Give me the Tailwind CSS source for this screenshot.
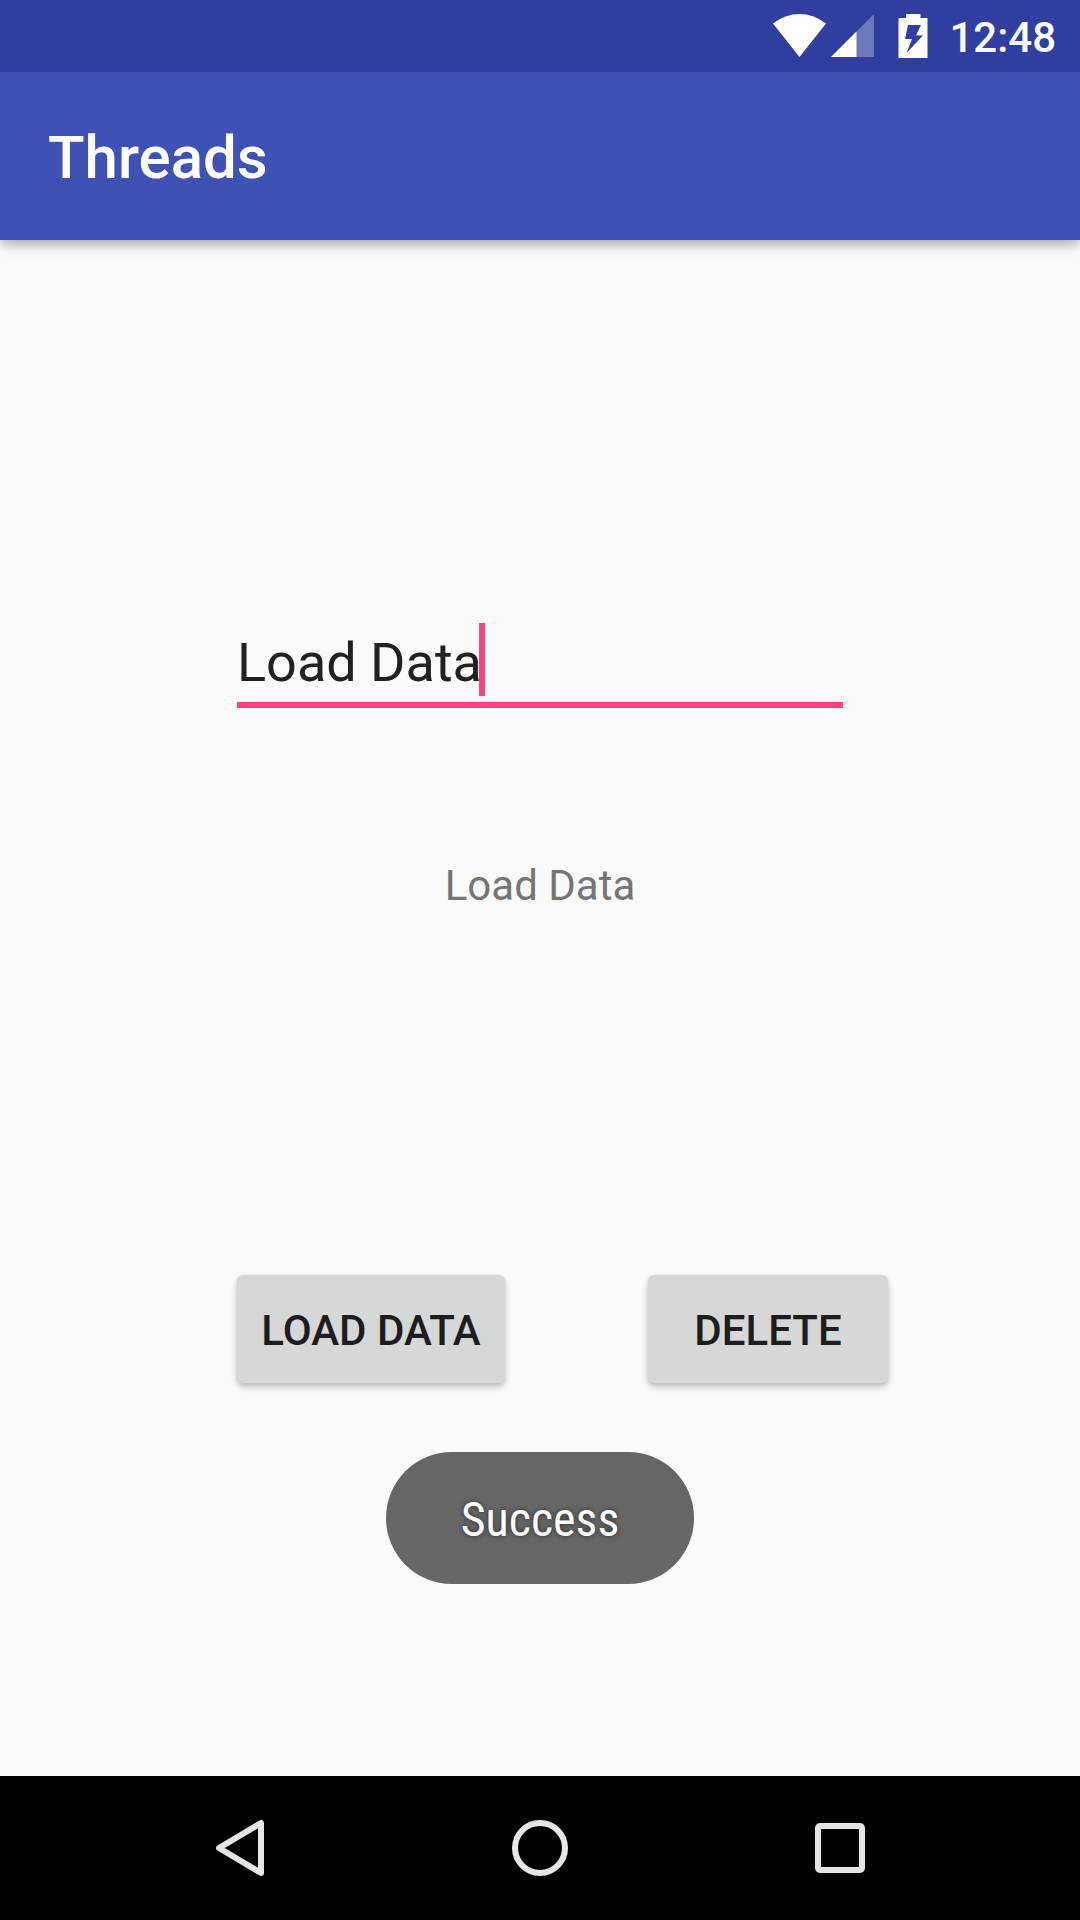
<!DOCTYPE html>
<html lang="en">
<head>
<meta charset="utf-8">
<meta name="viewport" content="width=device-width, initial-scale=1">
<title>Threads</title>
<script src="https://cdn.jsdelivr.net/npm/@tailwindcss/browser@4"></script>
</head>
<body class="flex min-h-screen flex-col bg-[#fafafa] font-['Roboto',sans-serif]">
  <!-- Status bar -->
  <div class="relative z-10 flex h-[72px] items-start justify-end bg-[#303f9f] pr-6 text-white">
    <svg class="mt-[14px] h-[44px] w-[54px]" viewBox="0 0 54 44" fill="currentColor" role="img" aria-label="Wi-Fi"><path d="M0 9.5Q12 0 26.500 0T53 9.500L26.500 43Z"/></svg>
    <svg class="mt-[14px] ml-1 h-[44px] w-[43px]" viewBox="0 0 43 44" fill="currentColor" role="img" aria-label="Signal"><path d="M43 0V43H0Z" opacity=".3"/><path d="M25.500 17.500V43H0Z"/></svg>
    <svg class="mt-[14px] ml-6 h-[44px] w-[30px]" viewBox="0 0 30 44" fill="currentColor" role="img" aria-label="Battery charging"><path fill-rule="evenodd" d="M8 0H22.500V4H29.500V44H.5V4H8ZM10 11L7 25H14L8.500 39L25 21.500H18L23 11Z"/></svg>
    <span class="ml-[21px] pt-1 text-[42px] leading-[68px] font-medium">12:48</span>
  </div>

  <!-- App bar -->
  <header class="relative flex h-[168px] items-center bg-[#3f51b5] px-12 pt-1 shadow-[0_4px_12px_rgba(0,0,0,0.34)]">
    <h1 class="text-[60px] leading-[72px] font-medium text-white">Threads</h1>
  </header>

  <main class="relative flex flex-1 flex-col items-center pt-[382px] pb-96">
    <div class="relative w-[606px]">
      <input type="text" value="Load Data" aria-label="Data" class="block h-[86px] w-full rounded-none border-b-6 border-[#ff4081] bg-transparent text-[54px] text-[#212121] caret-[#ff4081] outline-none">
      <span class="absolute top-px left-[242px] h-[73px] w-[6px] bg-[#ff4081]"></span>
    </div>
    <p class="mt-[150px] text-[42px] leading-[56px] text-[#757575]">Load Data</p>
    <div class="mt-[361px] flex w-[606px] gap-[143px]">
      <button type="button" class="h-[108px] w-[268px] shrink-0 rounded-md bg-[#d6d7d7] pt-0.5 text-[42px] font-medium whitespace-nowrap text-[#1d1d1d] shadow-[0_4px_6px_rgba(0,0,0,0.24),0_0_2px_rgba(0,0,0,0.08)]">LOAD DATA</button>
      <button type="button" class="h-[108px] w-[240px] shrink-0 rounded-md bg-[#d6d7d7] pt-0.5 text-[42px] font-medium whitespace-nowrap text-[#1d1d1d] shadow-[0_4px_6px_rgba(0,0,0,0.24),0_0_2px_rgba(0,0,0,0.08)]">DELETE</button>
    </div>

    <!-- Toast -->
    <div role="status" class="absolute bottom-48 left-1/2 flex h-[132px] w-[308px] -translate-x-1/2 items-center justify-center rounded-full bg-[#666666] pt-1 font-['Roboto_Condensed','Liberation_Sans_Narrow','Roboto',sans-serif] text-[48px] text-white [text-shadow:0_0_5px_rgba(0,0,0,0.6)]">Success</div>
  </main>

  <!-- Navigation bar -->
  <nav class="flex h-[144px] items-center justify-center gap-[156px] bg-black text-[#e6e6e6]" aria-label="System">
    <button type="button" aria-label="Back" class="flex size-[144px] items-center justify-center">
      <svg class="size-[60px]" viewBox="0 0 60 60" fill="none" stroke="currentColor" stroke-width="6" stroke-linejoin="round"><path d="M51 5V55L9 30Z"/></svg>
    </button>
    <button type="button" aria-label="Home" class="flex size-[144px] items-center justify-center">
      <svg class="size-[60px]" viewBox="0 0 60 60" fill="none" stroke="currentColor" stroke-width="6"><circle cx="30" cy="30" r="25"/></svg>
    </button>
    <button type="button" aria-label="Recent apps" class="flex size-[144px] items-center justify-center">
      <svg class="size-[60px]" viewBox="0 0 60 60" fill="none" stroke="currentColor" stroke-width="6"><rect x="8" y="8" width="44" height="44" rx="2"/></svg>
    </button>
  </nav>
</body>
</html>
